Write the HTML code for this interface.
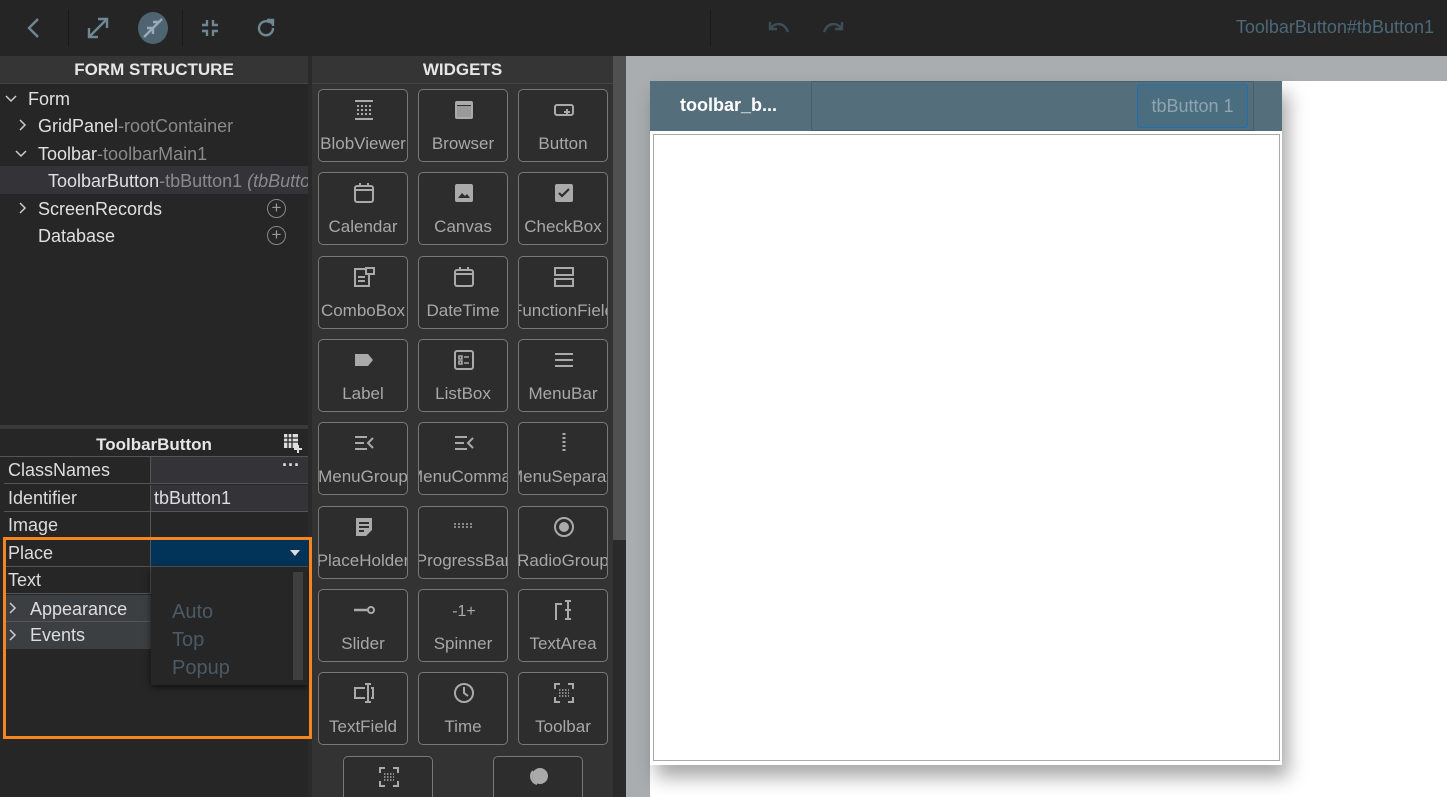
<!DOCTYPE html>
<html style="width:1447px;height:797px;overflow:hidden"><head><meta charset="utf-8"><style>
*{box-sizing:border-box;margin:0;padding:0}
body{width:1447px;height:797px;overflow:hidden;background:#fff;font-family:"Liberation Sans",sans-serif;position:relative}
.abs{position:absolute}
#top{left:0;top:0;width:1447px;height:56px;background:#252525}
.ico{position:absolute;stroke:#6f8793;fill:none;stroke-width:2.4}
#left{left:0;top:56px;width:308px;height:741px;background:#262626}
.hdr{background:#353535;color:#e6e6e6;font-weight:bold;font-size:17px;text-align:center;height:28px;line-height:28px;border-bottom:1px solid #444}
.tr{position:absolute;font-size:18px;color:#e0e0e0;white-space:nowrap}
.tr span{color:#8a8a8a}
.chev{position:absolute;stroke:#ccc;fill:none;stroke-width:1.5}
#wid{left:312px;top:56px;width:301px;height:741px;background:#333}
.tile{position:absolute;width:90px;height:73px;border:1px solid #787878;border-radius:5px;background:#2d2d2d;overflow:hidden;text-align:center}
.tile .l{position:absolute;left:-10px;right:-10px;top:44px;font-size:17px;color:#a8a8a8;white-space:nowrap;text-align:center}
.tile svg{position:absolute;left:33px;top:8px}
.prow{position:absolute;left:4px;width:304px;height:27px;border-bottom:1px solid #555;font-size:18px;color:#ddd}
.prow .k{position:absolute;left:4px;top:3px}
.prow .v{position:absolute;left:146px;top:0;width:158px;height:26px;border-left:1px solid #555}
</style></head><body>
<div class="abs" style="left:0;top:56px;width:626px;height:741px;background:#2a2a2a"></div>
<div id="top" class="abs">
<svg class="ico" style="left:22px;top:16px" width="24" height="24"><path d="M16 3 L7 12 L16 21"/></svg>
<div class="abs" style="left:68px;top:10px;width:1px;height:36px;background:#1a1a1a"></div>
<svg class="ico" style="left:85px;top:15px" width="26" height="26"><path d="M4 22 L22 4 M13 4 H22 V13 M4 13 V22 H13"/></svg>
<div class="abs" style="left:138px;top:12px;width:30px;height:32px;border-radius:50%;background:#4e6470"></div>
<svg class="ico" style="left:140px;top:15px;stroke:#9ab" width="26" height="26"><path d="M4 22 L22 4 M7 13 H13 V19 M19 7 H13"/></svg>
<div class="abs" style="left:182px;top:10px;width:1px;height:36px;background:#1a1a1a"></div>
<svg class="ico" style="left:200px;top:18px" width="20" height="20"><path d="M7 2 V7 H2 M13 2 V7 H18 M7 18 V13 H2 M13 18 V13 H18"/></svg>
<svg class="ico" style="left:254px;top:16px" width="24" height="24"><path d="M19 12 A7 7 0 1 1 16 6.5"/><path d="M13 4 H19 V10" fill="#6f8793"/></svg>
<div class="abs" style="left:710px;top:10px;width:1px;height:36px;background:#1a1a1a"></div>
<svg class="ico" style="left:766px;top:18px;stroke:#3e4e56" width="26" height="20"><path d="M4 4 V11 H11 M4 11 C9 4 18 4 22 14"/></svg>
<svg class="ico" style="left:820px;top:18px;stroke:#3e4e56" width="26" height="20"><path d="M22 4 V11 H15 M22 11 C17 4 8 4 4 14"/></svg>
<div class="abs" style="right:13px;top:17px;font-size:18px;color:#4d6878">ToolbarButton#tbButton1</div>
</div>

<div id="left" class="abs">
<div class="hdr">FORM STRUCTURE</div>
<svg class="chev" style="left:5px;top:37px" width="12" height="12"><path d="M1 3L6 8L11 3"/></svg>
<div class="tr" style="left:28px;top:33px">Form</div>
<svg class="chev" style="left:17px;top:63px" width="12" height="12"><path d="M3 1L8 6L3 11"/></svg>
<div class="tr" style="left:38px;top:60px">GridPanel<span>-rootContainer</span></div>
<svg class="chev" style="left:15px;top:92px" width="12" height="12"><path d="M1 3L6 8L11 3"/></svg>
<div class="tr" style="left:38px;top:88px">Toolbar<span>-toolbarMain1</span></div>
<div class="abs" style="left:0;top:110px;width:308px;height:28px;background:#333338"></div>
<div class="tr" style="left:48px;top:115px;width:260px;overflow:hidden">ToolbarButton<span>-tbButton1 <i>(tbButton1)</i></span></div>
<svg class="chev" style="left:17px;top:146px" width="12" height="12"><path d="M3 1L8 6L3 11"/></svg>
<div class="tr" style="left:38px;top:143px">ScreenRecords</div>
<div class="tr" style="left:38px;top:170px">Database</div>
<div class="abs" style="left:267px;top:143px;width:19px;height:19px;border:1px solid #888;border-radius:50%;color:#999;font-size:17px;line-height:16px;text-align:center">+</div>
<div class="abs" style="left:267px;top:170px;width:19px;height:19px;border:1px solid #888;border-radius:50%;color:#999;font-size:17px;line-height:16px;text-align:center">+</div>
<div class="abs" style="left:0;top:369px;width:308px;height:4px;background:#3a3a3a"></div>
<div class="abs" style="left:0;top:373px;width:308px;height:28px;background:#262626;color:#e6e6e6;font-weight:bold;font-size:17px;text-align:center;line-height:32px">ToolbarButton</div>
<svg class="abs" style="left:283px;top:377px" width="20" height="20" fill="#ddd"><rect x="1" y="1" width="14" height="14"/><path d="M1 5H15M1 9H15M5 1V15M9 1V15" stroke="#262626" stroke-width="1.3"/><path d="M15 12V20M11 16H19" stroke="#ddd" stroke-width="2"/></svg>
</div>
<div class="abs" style="left:0;top:456px;width:308px;height:1px;background:#555"></div>
<div class="prow" style="top:457px"><div class="k">ClassNames</div><div class="v" style="background:#343438"><span style="position:absolute;right:8px;top:-2px;color:#ddd;font-weight:bold">···</span></div></div>
<div class="prow" style="top:485px"><div class="k">Identifier</div><div class="v" style="background:#343438"><span style="position:absolute;left:3px;top:3px">tbButton1</span></div></div>
<div class="prow" style="top:512px"><div class="k">Image</div><div class="v"></div></div>
<div class="prow" style="top:540px"><div class="k">Place</div><div class="v" style="background:#023358"><svg style="position:absolute;right:8px;top:10px" width="10" height="6"><path d="M0 0H10L5 6Z" fill="#ddd"/></svg></div></div>
<div class="prow" style="top:567px"><div class="k">Text</div><div class="v"></div></div>
<div class="abs" style="left:4px;top:595px;width:147px;height:27px;background:#3c3f42;border-bottom:1px solid #555;font-size:18px;color:#ddd"><svg class="chev" style="left:4px;top:7px" width="10" height="12"><path d="M2 1L7 6L2 11"/></svg><span style="position:absolute;left:26px;top:4px">Appearance</span></div>
<div class="abs" style="left:4px;top:622px;width:147px;height:27px;background:#3c3f42;font-size:18px;color:#ddd"><svg class="chev" style="left:4px;top:7px" width="10" height="12"><path d="M2 1L7 6L2 11"/></svg><span style="position:absolute;left:26px;top:3px">Events</span></div>
<div class="abs" style="left:151px;top:567px;width:157px;height:118px;background:#262626;box-shadow:0 2px 6px rgba(0,0,0,.6)">
<div class="abs" style="left:142px;top:5px;width:10px;height:108px;background:#3f3f3f"></div>
<div class="abs" style="left:21px;top:31px;font-size:20px;color:#4a5a66;line-height:28px">Auto<br>Top<br>Popup</div>
</div>
<div class="abs" style="left:3px;top:537px;width:309px;height:202px;border:3px solid #f5861f"></div>

<div id="wid" class="abs">
<div class="hdr" style="background:#353535">WIDGETS</div>
</div>
<div class="abs" style="left:613px;top:56px;width:13px;height:741px;background:#2a2a2a"></div>
<div class="abs" style="left:613px;top:56px;width:13px;height:484px;background:#505050"></div>

<div id="tiles"></div>

<div class="abs" style="left:626px;top:56px;width:821px;height:25px;background:#a9adb0"></div>
<div class="abs" style="left:626px;top:56px;width:24px;height:741px;background:#a9adb0"></div>
<div class="abs" style="left:650px;top:81px;width:632px;height:684px;background:#fff;box-shadow:6px 12px 18px rgba(0,0,0,.35)"></div>
<div class="abs" style="left:650px;top:81px;width:632px;height:50px;background:#546f7b"></div>
<div class="abs" style="left:811px;top:81px;width:443px;height:50px;border:1px solid #45606c"></div>
<div class="abs" style="left:680px;top:95px;font-size:18px;font-weight:bold;color:#fff">toolbar_b...</div>
<div class="abs" style="left:1137px;top:84px;width:111px;height:44px;border:1px solid #1f6fb3;border-radius:3px;background:#4a6d80;color:#8ea4b0;font-size:18px;text-align:center;line-height:42px">tbButton 1</div>
<div class="abs" style="left:653px;top:134px;width:627px;height:627px;border:1px solid #aaa"></div>

<script>
var names=["BlobViewer","Browser","Button","Calendar","Canvas","CheckBox","ComboBox","DateTime","FunctionField","Label","ListBox","MenuBar","MenuGroup","MenuCommand","MenuSeparator","PlaceHolder","ProgressBar","RadioGroup","Slider","Spinner","TextArea","TextField","Time","Toolbar"];
var icons={
0:'<path d="M3 3H21M3 21H21" stroke="#aaa" stroke-width="2"/><path d="M5 8H19M5 12H19M5 16H19" stroke="#aaa" stroke-width="2" stroke-dasharray="2 2"/>',
1:'<rect x="3" y="3" width="18" height="18" rx="2" fill="#aaa"/><rect x="5" y="7" width="14" height="12" fill="#2d2d2d"/><rect x="5" y="8" width="14" height="11" fill="#999"/>',
2:'<rect x="3" y="7" width="18" height="10" rx="2" stroke="#aaa" stroke-width="2" fill="none"/><path d="M15 11v6M12 14h6" stroke="#aaa" stroke-width="2"/>',
3:'<rect x="3" y="5" width="18" height="16" rx="2" stroke="#aaa" stroke-width="2" fill="none"/><path d="M3 9H21M8 2V6M16 2V6" stroke="#aaa" stroke-width="2"/>',
4:'<rect x="3" y="3" width="18" height="18" rx="2" fill="#aaa"/><path d="M6 17L10 12L13 15L15 13L18 17Z" fill="#2d2d2d"/>',
5:'<rect x="3" y="3" width="18" height="18" rx="2" fill="#aaa"/><path d="M7 12L10 15L17 8" stroke="#2d2d2d" stroke-width="2.2" fill="none"/>',
6:'<rect x="3" y="4" width="14" height="17" stroke="#aaa" stroke-width="2" fill="none"/><rect x="14" y="3" width="8" height="6" stroke="#aaa" stroke-width="2" fill="#2d2d2d"/><path d="M6 12H13M6 16H13" stroke="#aaa" stroke-width="2"/>',
7:'<rect x="3" y="5" width="18" height="16" rx="2" stroke="#aaa" stroke-width="2" fill="none"/><path d="M3 9H21M8 2V6M16 2V6" stroke="#aaa" stroke-width="2"/>',
8:'<rect x="3" y="3" width="18" height="7" stroke="#aaa" stroke-width="2" fill="none"/><rect x="3" y="14" width="18" height="7" stroke="#aaa" stroke-width="2" fill="none"/>',
9:'<path d="M3 6H16L21 12L16 18H3Z" fill="#aaa"/>',
10:'<rect x="3" y="3" width="18" height="18" rx="2" stroke="#aaa" stroke-width="2" fill="none"/><path d="M7 8h3v3H7zM7 13h3v3H7zM12 9h5M12 15h5" stroke="#aaa" stroke-width="1.6" fill="none"/>',
11:'<path d="M3 6H21M3 12H21M3 18H21" stroke="#aaa" stroke-width="2"/>',
12:'<path d="M3 6H15M3 12H12M3 18H15M21 7L16 12L21 17" stroke="#aaa" stroke-width="2" fill="none"/>',
13:'<path d="M3 6H15M3 12H12M3 18H15M21 7L16 12L21 17" stroke="#aaa" stroke-width="2" fill="none"/>',
14:'<path d="M12 2V22" stroke="#aaa" stroke-width="3" stroke-dasharray="2 2"/>',
15:'<path d="M4 3H20V15L14 21H4Z" fill="#aaa"/><path d="M7 8H17M7 12H17M7 16H12" stroke="#2d2d2d" stroke-width="2"/>',
16:'<path d="M2 12H22M2 9H22" stroke="#aaa" stroke-width="1.5" stroke-dasharray="2 2"/>',
17:'<circle cx="12" cy="12" r="9" stroke="#aaa" stroke-width="2" fill="none"/><circle cx="12" cy="12" r="5" fill="#aaa"/>',
18:'<path d="M2 12H16" stroke="#aaa" stroke-width="2.5"/><circle cx="19" cy="12" r="3" stroke="#aaa" stroke-width="2" fill="none"/>',
19:'<text x="12" y="18" text-anchor="middle" font-size="16" fill="#aaa" font-family="Liberation Sans">-1+</text>',
20:'<path d="M4 22V6H10M16 3V21M13 3H19M13 21H19M13 12H19" stroke="#aaa" stroke-width="2" fill="none"/>',
21:'<path d="M13 7H3V17H13M16 3V21M13 3H19M13 21H19M19 7H21V17H19" stroke="#aaa" stroke-width="2" fill="none"/>',
22:'<circle cx="12" cy="12" r="9" stroke="#aaa" stroke-width="2" fill="none"/><path d="M12 6V12L16 15" stroke="#aaa" stroke-width="2" fill="none"/>',
23:'<path d="M3 8V3H8M16 3H21V8M3 16V21H8M16 21H21V16" stroke="#aaa" stroke-width="2" fill="none"/><path d="M7 9H17M7 12H17M7 15H17" stroke="#aaa" stroke-width="1.5" stroke-dasharray="1.5 1.5"/>'};
var h='';
for(var i=0;i<24;i++){var c=i%3,r=Math.floor(i/3);var x=318+c*100,y=89+r*83.3;
h+='<div class="tile" style="left:'+x+'px;top:'+y+'px"><svg width="24" height="24" viewBox="0 0 24 24">'+icons[i]+'</svg><div class="l">'+names[i]+'</div></div>';}
h+='<div class="tile" style="left:343px;top:756px;height:41px;border-bottom:none;border-radius:5px 5px 0 0"><svg width="24" height="24" viewBox="0 0 24 24">'+icons[23]+'</svg></div>';
h+='<div class="tile" style="left:493px;top:756px;height:41px;border-bottom:none;border-radius:5px 5px 0 0"><svg width="24" height="24" viewBox="0 0 24 24"><circle cx="13" cy="11" r="8" fill="#aaa"/><path d="M6 6A8 8 0 0 0 10 19" stroke="#aaa" stroke-width="2" fill="none"/></svg></div>';
document.getElementById('tiles').innerHTML=h;
</script>
</body></html>
